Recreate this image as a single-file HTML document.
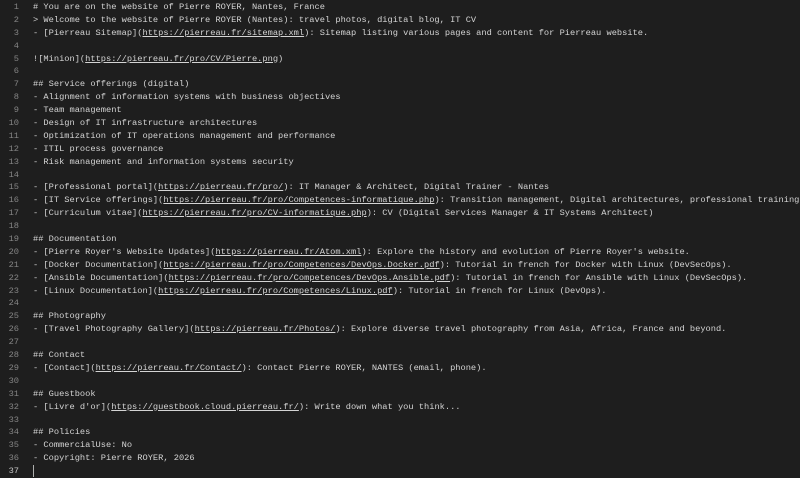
<!DOCTYPE html>
<html><head><meta charset="utf-8"><style>
html,body{margin:0;padding:0;background:#1e1e1e;width:800px;height:477px;overflow:hidden}
.w{position:absolute;top:1px;left:0;font-family:"Liberation Mono",monospace;font-size:8.7px;line-height:12.9px;color:#d4d4d4}
.r{white-space:pre;height:12.9px;position:relative}
.n{position:absolute;left:0;width:19px;text-align:right;color:#858585}
.t{position:absolute;left:33px}
u{text-decoration:underline;text-underline-offset:1px}
.cur .n{color:#c6c6c6}
.caret{display:inline-block;width:1px;height:12px;background:#aeafad;vertical-align:top}
</style></head><body><div class="w">
<div class="r"><span class="n">1</span><span class="t"># You are on the website of Pierre ROYER, Nantes, France</span></div>
<div class="r"><span class="n">2</span><span class="t">&gt; Welcome to the website of Pierre ROYER (Nantes): travel photos, digital blog, IT CV</span></div>
<div class="r"><span class="n">3</span><span class="t">- [Pierreau Sitemap](<u>https://pierreau.fr/sitemap.xml</u>): Sitemap listing various pages and content for Pierreau website.</span></div>
<div class="r"><span class="n">4</span><span class="t"></span></div>
<div class="r"><span class="n">5</span><span class="t">![Minion](<u>https://pierreau.fr/pro/CV/Pierre.png</u>)</span></div>
<div class="r"><span class="n">6</span><span class="t"></span></div>
<div class="r"><span class="n">7</span><span class="t">## Service offerings (digital)</span></div>
<div class="r"><span class="n">8</span><span class="t">- Alignment of information systems with business objectives</span></div>
<div class="r"><span class="n">9</span><span class="t">- Team management</span></div>
<div class="r"><span class="n">10</span><span class="t">- Design of IT infrastructure architectures</span></div>
<div class="r"><span class="n">11</span><span class="t">- Optimization of IT operations management and performance</span></div>
<div class="r"><span class="n">12</span><span class="t">- ITIL process governance</span></div>
<div class="r"><span class="n">13</span><span class="t">- Risk management and information systems security</span></div>
<div class="r"><span class="n">14</span><span class="t"></span></div>
<div class="r"><span class="n">15</span><span class="t">- [Professional portal](<u>https://pierreau.fr/pro/</u>): IT Manager &amp; Architect, Digital Trainer - Nantes</span></div>
<div class="r"><span class="n">16</span><span class="t">- [IT Service offerings](<u>https://pierreau.fr/pro/Competences-informatique.php</u>): Transition management, Digital architectures, professional training</span></div>
<div class="r"><span class="n">17</span><span class="t">- [Curriculum vitae](<u>https://pierreau.fr/pro/CV-informatique.php</u>): CV (Digital Services Manager &amp; IT Systems Architect)</span></div>
<div class="r"><span class="n">18</span><span class="t"></span></div>
<div class="r"><span class="n">19</span><span class="t">## Documentation</span></div>
<div class="r"><span class="n">20</span><span class="t">- [Pierre Royer's Website Updates](<u>https://pierreau.fr/Atom.xml</u>): Explore the history and evolution of Pierre Royer's website.</span></div>
<div class="r"><span class="n">21</span><span class="t">- [Docker Documentation](<u>https://pierreau.fr/pro/Competences/DevOps.Docker.pdf</u>): Tutorial in french for Docker with Linux (DevSecOps).</span></div>
<div class="r"><span class="n">22</span><span class="t">- [Ansible Documentation](<u>https://pierreau.fr/pro/Competences/DevOps.Ansible.pdf</u>): Tutorial in french for Ansible with Linux (DevSecOps).</span></div>
<div class="r"><span class="n">23</span><span class="t">- [Linux Documentation](<u>https://pierreau.fr/pro/Competences/Linux.pdf</u>): Tutorial in french for Linux (DevOps).</span></div>
<div class="r"><span class="n">24</span><span class="t"></span></div>
<div class="r"><span class="n">25</span><span class="t">## Photography</span></div>
<div class="r"><span class="n">26</span><span class="t">- [Travel Photography Gallery](<u>https://pierreau.fr/Photos/</u>): Explore diverse travel photography from Asia, Africa, France and beyond.</span></div>
<div class="r"><span class="n">27</span><span class="t"></span></div>
<div class="r"><span class="n">28</span><span class="t">## Contact</span></div>
<div class="r"><span class="n">29</span><span class="t">- [Contact](<u>https://pierreau.fr/Contact/</u>): Contact Pierre ROYER, NANTES (email, phone).</span></div>
<div class="r"><span class="n">30</span><span class="t"></span></div>
<div class="r"><span class="n">31</span><span class="t">## Guestbook</span></div>
<div class="r"><span class="n">32</span><span class="t">- [Livre d'or](<u>https://guestbook.cloud.pierreau.fr/</u>): Write down what you think...</span></div>
<div class="r"><span class="n">33</span><span class="t"></span></div>
<div class="r"><span class="n">34</span><span class="t">## Policies</span></div>
<div class="r"><span class="n">35</span><span class="t">- CommercialUse: No</span></div>
<div class="r"><span class="n">36</span><span class="t">- Copyright: Pierre ROYER, 2026</span></div>
<div class="r cur"><span class="n">37</span><span class="t"><span class="caret"></span></span></div>
</div></body></html>
